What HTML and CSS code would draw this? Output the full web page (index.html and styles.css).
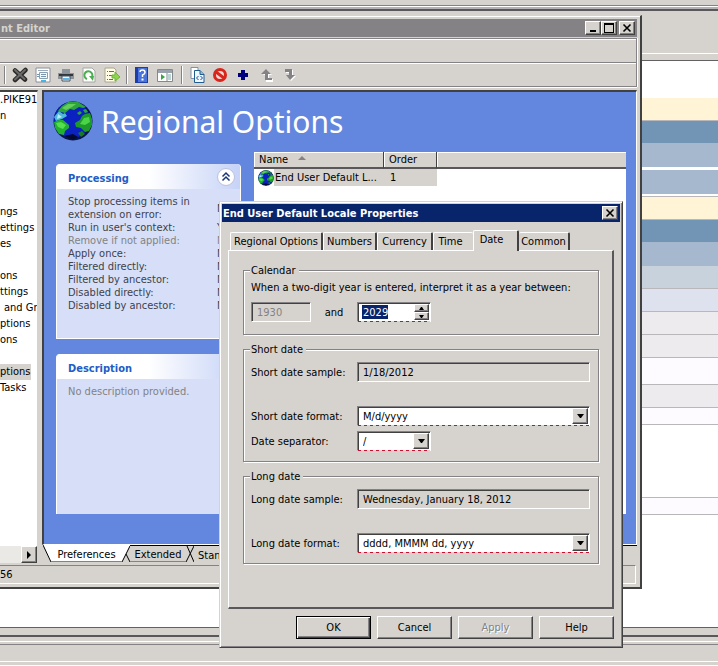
FILE: index.html
```html
<!DOCTYPE html>
<html lang="en">
<head>
<meta charset="utf-8">
<title>Group Policy Management Editor</title>
<link rel="stylesheet" href="styles.css">
</head>
<body>
<svg class="defs" aria-hidden="true">
  <symbol id="globe" viewBox="0 0 40 40">
    <circle cx="20" cy="20" r="19.500" fill="#05124e"/>
    <circle cx="19" cy="19" r="18" fill="#0b22c0"/>
    <path d="M5 10 9 5 15 1 25 1 33 6 30 7 26 6 21 9 17 8 12 12 8 11Z" fill="#2ea53c"/>
    <path d="M9 7 15 3 23 3 19 6 13 9Z" fill="#62cf5c"/>
    <path d="M1 16 6 10 10 13 12 12 14 15 9 18 3 20Z" fill="#4fb8d8"/>
    <path d="M5 13 9 16 4 18Z" fill="#b5ecf5"/>
    <path d="M1 21 6 19 10 19 16 24 16 27 12 30 11 34 6 33 2 27Z" fill="#22b02f"/>
    <path d="M3 22 8 21 13 24 10 28 5 26Z" fill="#55de4e"/>
    <path d="M24 12 27 10 29 12 26 14ZM30 9l3-1 2 3-3 1Z" fill="#2ea53c"/>
    <path d="M32 13 37 12 39 18 39 24 36 30 32 31 28 27 23 26 22 22 27 19 29 15Z" fill="#1e9a2b"/>
    <path d="M31 17 36 16 37 21 32 24 27 23Z" fill="#4bd447"/>
    <path d="M25 32 29 30 32 33 28 36Z" fill="#157c24"/>
    <path d="M11 35 20 33 25 36 20 39Z" fill="#030a30"/>
  </symbol>
</svg>
<div class="desktop">
  <div class="back-top"></div>
  <div class="back-bar"></div>
  <div class="back-tools"></div>
  <div class="bands">
    <div class="band tall"></div>
    <div class="band cream lined"></div>
    <div class="band steel"></div>
    <div class="band sky"></div>
    <div class="band split"></div>
    <div class="band sky"></div>
    <div class="band split lined"></div>
    <div class="band cream lined"></div>
    <div class="band steel"></div>
    <div class="band sky"></div>
    <div class="band mist lined"></div>
    <div class="band lilac lined"></div>
    <div class="band pearl lined"></div>
    <div class="band pearl lined"></div>
    <div class="band pale lined"></div>
    <div class="band pearl lined"></div>
    <div class="band pale short lined"></div>
    <div class="band gap lined"></div>
    <div class="band pale short lined"></div>
  </div>
  <div class="back-edge"></div>
  <div class="back-status"></div>
  <div class="back-foot"></div>

  <section class="editor">
    <header class="titlebar inactive">
      <span class="title">nt Editor</span>
      <button class="cap" aria-label="Minimize"><svg viewBox="0 0 12 10"><path d="M3 7h6v2H3z"/></svg></button>
      <button class="cap" aria-label="Maximize"><svg viewBox="0 0 12 10"><path d="M1 0h10v10H1zM2 2v7h8V2z" fill-rule="evenodd"/></svg></button>
      <button class="cap apart" aria-label="Close"><svg viewBox="0 0 12 10"><path d="m2.500 1.500 7 7M9.500 1.500l-7 7" stroke="#000" stroke-width="1.600"/></svg></button>
    </header>
    <div class="menubar"></div>
    <div class="toolbar">
      <span class="sep first"></span>
      <button aria-label="Delete"><svg viewBox="0 0 16 16"><path d="m3 3.500 10 9M13.500 3 3 13" stroke="#2b2b2b" stroke-width="4.500" stroke-linecap="round"/><path d="m3 3 9.500 9M13 3 3 12.500" stroke="#6a6a6a" stroke-width="2" stroke-linecap="round"/></svg></button>
      <button aria-label="Properties"><svg viewBox="0 0 16 16"><path d="M1 1h14v14H1z" fill="#fff" stroke="#8a9099"/><path d="M3 3.500h10" stroke="#9ab"/><path d="M4.500 5.500h8v6h-8z" fill="#f3f8fb" stroke="#89a0b0"/><path d="M2 7.500h2M2 9.500h2M6 7.500h5M6 9.500h5" stroke="#7795ae"/><path d="M6 13h5v2H6z" fill="#42b5e8"/></svg></button>
      <button aria-label="Print"><svg viewBox="0 0 16 16"><path d="M4 2h8v4H4z" fill="#8c949c"/><path d="M0 6h16v6H0z" fill="#8d9296"/><path d="M1 7h14v2H1z" fill="#33373c"/><path d="M4 9h8v5H4z" fill="#eef6fc" stroke="#456"/><path d="M5 11h6v2H5z" fill="#5fb7e8"/></svg></button>
      <button aria-label="Refresh"><svg viewBox="0 0 16 16"><path d="M2 1h9l3 3v11H2z" fill="#fff" stroke="#a5a5a5"/><path d="M6 12a4 4 0 1 1 5-2" fill="none" stroke="#4cae4f" stroke-width="2"/><path d="m8 9 5 0-1 5z" fill="#4cae4f"/></svg></button>
      <button aria-label="Export list"><svg viewBox="0 0 16 16"><path d="M1 1h9l2 2v12H1z" fill="#fffbe4" stroke="#aaa68c"/><path d="M3 4.500h1M5 4.500h5M3 8.500h1M5 8.500h4M3 12.500h1M5 12.500h4" stroke="#68685c"/><path d="M8 8h3V5l5 5-5 4v-3H8z" fill="#8fd34b" stroke="#6ab53a"/></svg></button>
      <span class="sep"></span>
      <button aria-label="Help"><svg viewBox="0 0 16 16"><path d="M1 0h13v16H1z" fill="#1f3da8"/><path d="M4 1h9v14H4z" fill="#4a74dc"/><path d="M6 5q0-2 2.500-2T11 5.500Q11 7 8.500 8v2" fill="none" stroke="#fff" stroke-width="1.500"/><path d="M7.500 11.500h2v2h-2z" fill="#fff"/></svg></button>
      <button aria-label="Show action pane"><svg viewBox="0 0 16 16"><path d="M.5 2.500h15v12H.5z" fill="#fff" stroke="#84898e"/><path d="M1 3h14v3H1z" fill="#9aa3ab"/><path d="M10 6v8" stroke="#84898e"/><path d="M11 8h3M11 10h3M11 12h3" stroke="#7aa"/><path d="m4 7 4 3-4 3z" fill="#3aa344"/></svg></button>
      <span class="sep wide"></span>
      <button aria-label="Show XML"><svg viewBox="0 0 16 16"><path d="M2 .5h7v11H2z" fill="#fff" stroke="#7b93a8"/><path d="M5.500 3.500H11l4 4v8H5.500z" fill="#eef6ff" stroke="#1e5d8e"/><path d="M11 3.500v4h4" fill="#8db8dc" stroke="#1e5d8e"/><path d="m9.500 9-2 2 2 2M11.500 9l2 2-2 2" fill="none" stroke="#124c9e"/></svg></button>
      <button aria-label="Disable"><svg viewBox="0 0 16 16"><circle cx="8" cy="8" r="5.500" fill="#f3d8d2" stroke="#d9261c" stroke-width="3"/><path d="m4 5 8 6" stroke="#d9261c" stroke-width="3"/></svg></button>
      <button aria-label="Add"><svg viewBox="0 0 16 16"><path d="M6 3h4v3h3v4h-3v3H6v-3H3V6h3z" fill="#00007e"/></svg></button>
      <button aria-label="Move up"><svg viewBox="0 0 16 16"><path d="M9 3l5 5h-3v4h4v3H8V8H5z" fill="#fff"/><path d="M8 2l5 5h-3v4h4v2H7V7H3z" fill="#848284"/></svg></button>
      <button aria-label="Move down"><svg viewBox="0 0 16 16"><path d="M5 3h7v6h3l-5 5-4-5h3V6H5z" fill="#fff"/><path d="M4 2h7v6h3l-5 5-4-5h3V5H4z" fill="#848284"/></svg></button>
    </div>

    <div class="main">
      <nav class="tree">
        <ul>
          <li>.PIKE91</li><li>n</li><li></li><li></li><li></li><li></li><li></li>
          <li>ngs</li><li>ettings</li><li>es</li><li></li><li>ons</li><li>ttings</li>
          <li class="indent">and Gro</li><li>ptions</li><li>ons</li><li></li>
          <li><span class="current">ptions</span></li><li>Tasks</li>
        </ul>
        <div class="hscroll"><button aria-label="Scroll right"><svg viewBox="0 0 8 8"><path d="M2 0l4 4-4 4z"/></svg></button></div>
      </nav>
      <div class="pane">
        <div class="blue">
          <div class="heading"><svg class="globe-lg"><use href="#globe"/></svg><h1>Regional Options</h1></div>
          <div class="columns">
            <aside class="cards">
              <section class="card processing">
                <h2>Processing <button aria-label="Collapse"><svg viewBox="0 0 18 18"><circle cx="9" cy="9" r="8.500" fill="#fff" stroke="#b9c1dc"/><path d="M5.500 8.500 9 5l3.500 3.500M5.500 12.500 9 9l3.500 3.500" fill="none" stroke="#17357c" stroke-width="1.500"/></svg></button></h2>
                <dl>
                  <dt>Stop processing items in extension on error:</dt><dd>No</dd>
                  <dt>Run in user's context:</dt><dd>Yes</dd>
                  <dt class="off">Remove if not applied:</dt><dd class="off">No</dd>
                  <dt>Apply once:</dt><dd>No</dd>
                  <dt>Filtered directly:</dt><dd>No</dd>
                  <dt>Filtered by ancestor:</dt><dd>No</dd>
                  <dt>Disabled directly:</dt><dd>No</dd>
                  <dt>Disabled by ancestor:</dt><dd>No</dd>
                </dl>
              </section>
              <section class="card description">
                <h2>Description</h2>
                <p>No description provided.</p>
              </section>
            </aside>
            <div class="list">
              <table>
                <thead><tr><th class="name">Name <svg class="sort" viewBox="0 0 8 4"><path d="M4 0l4 4H0z"/></svg></th><th class="order">Order</th><th></th></tr></thead>
                <tbody><tr><td><div class="item"><svg class="globe-sm"><use href="#globe"/></svg><span>End User Default L...</span></div></td><td class="picked">1</td><td></td></tr></tbody>
              </table>
            </div>
          </div>
        </div>
        <div class="sheets">
          <svg class="slope" viewBox="0 0 8 17"><path d="M0 0h8v17z" fill="#fff"/><path d="M0 0l8 17" stroke="#000"/></svg>
          <button class="sheet on">Preferences</button>
          <svg class="slope" viewBox="0 0 8 17"><path d="M0 0h8L0 17z" fill="#fff"/><path d="M8 1 0 17M4 9l4 8" stroke="#000" fill="none"/></svg>
          <button class="sheet">Extended</button>
          <svg class="slope" viewBox="0 0 8 17"><path d="M0 .5h8M8 1 0 17M1 1l7 16" stroke="#000" fill="none"/></svg>
          <button class="sheet last">Standard</button>
        </div>
      </div>
    </div>
    <footer class="status"><span>56</span></footer>
  </section>

  <form class="dialog" role="dialog" aria-label="End User Default Locale Properties">
    <header class="titlebar">
      <span class="title">End User Default Locale Properties</span>
      <button type="button" class="cap" aria-label="Close dialog"><svg viewBox="0 0 12 10"><path d="m2.500 1.500 7 7M9.500 1.500l-7 7" stroke="#000" stroke-width="1.600"/></svg></button>
    </header>
    <div class="tabs" role="tablist">
      <button type="button" role="tab" class="tab t-regional">Regional Options</button>
      <button type="button" role="tab" class="tab t-numbers">Numbers</button>
      <button type="button" role="tab" class="tab t-currency">Currency</button>
      <button type="button" role="tab" class="tab t-time">Time</button>
      <button type="button" role="tab" class="tab active" aria-selected="true">Date</button>
      <button type="button" role="tab" class="tab t-common">Common</button>
    </div>
    <div class="page">
      <fieldset>
        <legend>Calendar</legend>
        <p class="lead">When a two-digit year is entered, interpret it as a year between:</p>
        <div class="years">
          <input class="field from" aria-label="From year" value="1930" disabled>
          <label for="to">and</label>
          <div class="box required spin"><input id="to" value="2029"><div class="arrows"><button type="button" aria-label="Increase"><svg viewBox="0 0 5 3"><path d="M2 0h1l2 3H0z"/></svg></button><button type="button" aria-label="Decrease"><svg viewBox="0 0 5 3"><path d="M0 0h5L3 3H2z"/></svg></button></div></div>
        </div>
      </fieldset>
      <fieldset>
        <legend>Short date</legend>
        <div class="rows">
          <label for="ss">Short date sample:</label><input id="ss" class="field" value="1/18/2012" readonly>
          <label for="sf" class="spaced">Short date format:</label><div class="box required spaced"><select id="sf"><option>M/d/yyyy</option></select><span class="drop"><svg viewBox="0 0 7 4"><path d="M0 0h7L4 4H3z"/></svg></span></div>
          <label for="ds">Date separator:</label><div class="box required narrow"><select id="ds"><option>/</option></select><span class="drop"><svg viewBox="0 0 7 4"><path d="M0 0h7L4 4H3z"/></svg></span></div>
        </div>
      </fieldset>
      <fieldset>
        <legend>Long date</legend>
        <div class="rows">
          <label for="ls">Long date sample:</label><input id="ls" class="field" value="Wednesday, January 18, 2012" readonly>
          <label for="lf" class="spaced">Long date format:</label><div class="box required spaced"><select id="lf"><option>dddd, MMMM dd, yyyy</option></select><span class="drop"><svg viewBox="0 0 7 4"><path d="M0 0h7L4 4H3z"/></svg></span></div>
        </div>
      </fieldset>
    </div>
    <div class="actions">
      <button type="button" class="push default">OK</button>
      <button type="button" class="push">Cancel</button>
      <button type="button" class="push" disabled>Apply</button>
      <button type="button" class="push">Help</button>
    </div>
  </form>
</div>
</body>
</html>
```
FILE: styles.css
```css
:root {
  --face: #d6d3ce;
  --shade: #848284;
  --dark: #424142;
  --navy: #08246b;
  --blue: #6387de;
}
* { box-sizing: border-box; }
body {
  margin: 0;
  background: var(--face);
  color: #000;
  font: 11px/13px "DejaVu Sans Condensed", "Noto Sans", sans-serif;
}
button, input, select { font: inherit; color: inherit; margin: 0; padding: 0; border: 0; border-radius: 0; background: none; outline: 0; }
p, h1, h2, ul, dl, dd { margin: 0; padding: 0; }
svg { display: block; flex: none; }
.defs { position: absolute; width: 0; height: 0; }

/* window behind the editor */
.desktop { position: relative; display: flex; flex-direction: column; min-height: 100vh; overflow: hidden; }
.back-top { height: 6px; border-bottom: 1px solid var(--shade); }
.back-bar { height: 5px; border-top: 1px solid #fff; border-bottom: 2px solid #5a575a; background: #b5b2b5; }
.back-tools { height: 43px; border-bottom: 1px solid #fff; }
.bands { margin-top: 6px; flex: 1; background: #fff; border-top: 1px solid #636163; border-bottom: 1px solid #636163; }
.band { height: 23px; }
.band.tall { height: 37px; }
.lined { border-bottom: 1px solid #b9b7ba; }
.cream { background: #fff5d6; }
.steel { background: #7295b5; }
.band.steel { height: 22px; }
.band.sky { height: 24px; background: #a5b8ce; }
.band.split { height: 3px; }
.mist { background: #c8d2dd; }
.lilac { background: #dee2ef; }
.pearl { background: #eeebee; }
.pale { background: #fdfbff; }
.band.pale { height: 27px; }
.band.pale.short { height: 17px; }
.band.gap { height: 73px; }
.back-edge { height: 9px; border-bottom: 2px solid #5a575a; }
.back-status { height: 8px; margin-top: 4px; border-top: 1px solid #fff; }
.back-status::after { content: ""; display: block; margin-top: 2px; border-top: 1px solid var(--shade); }
.back-foot { height: 17px; padding-top: 12px; }
.back-foot::after { content: ""; display: block; height: 3px; border-top: 1px solid #fff; border-bottom: 1px solid #fff; }

/* shared window chrome */
.titlebar { display: flex; align-items: center; height: 18px; padding-right: 2px; background: var(--navy); color: #fff; font-weight: bold; }
.titlebar.inactive { background: var(--shade); color: var(--face); }
.title { flex: 1; padding-left: 1px; white-space: nowrap; overflow: hidden; }
.cap { width: 16px; height: 14px; padding: 1px; background: var(--face); border: 1px solid; border-color: #fff var(--dark) var(--dark) #fff; box-shadow: inset -1px -1px var(--shade); }
.cap svg { width: 12px; height: 10px; }
.cap.apart { margin-left: 2px; }

/* editor window */
.editor { position: absolute; left: 0; right: 76px; top: 15px; padding: 2px 3px 3px 0; background: var(--face); border: solid; border-width: 1px 2px 2px 0; border-color: var(--face) var(--dark) var(--dark) #fff; box-shadow: inset 0 1px #fff; }
.editor > .titlebar { margin-top: 1px; }
.menubar { height: 24px; margin-top: 1px; border: 1px solid var(--shade); border-left: 0; border-bottom: 0; box-shadow: inset 0 1px #fff, 1px 0 #fff; }
.toolbar { display: flex; align-items: center; height: 25px; border: 1px solid var(--shade); border-left: 0; box-shadow: inset 0 1px #fff, 0 1px #fff, 1px 0 #fff; }
.toolbar button { display: grid; place-items: center; width: 23px; height: 22px; }
.toolbar button svg { width: 16px; height: 16px; }
.sep { width: 2px; height: 18px; margin: 0 2px 0 3px; border-left: 1px solid var(--shade); border-right: 1px solid #fff; }
.sep.first { margin-left: 4px; }
.sep.wide { margin: 0 2px 0 5px; }
.main { display: flex; margin-top: 3px; }
.tree { display: flex; flex-direction: column; justify-content: space-between; width: 38px; overflow: hidden; background: #fff; border-top: 2px solid var(--dark); border-right: 1px solid var(--face); }
.tree ul { list-style: none; }
.tree li { height: 16px; line-height: 16px; white-space: nowrap; }
.tree .indent { padding-left: 4px; }
.current { display: inline-block; padding-right: 1px; background: var(--face); }
.hscroll { display: flex; justify-content: flex-end; height: 17px; background: #ebe9e6; }
.hscroll button { display: grid; place-items: center; width: 16px; background: var(--face); border: 1px solid; border-color: #fff var(--dark) var(--dark) #fff; box-shadow: inset -1px -1px var(--shade); }
.hscroll svg { width: 8px; height: 8px; }
.pane { flex: 1; min-width: 0; margin-left: 4px; }
.blue { padding: 9px 10px 30px 12px; background: var(--blue); border: solid; border-width: 2px 1px 1px 2px; border-color: var(--dark) #fff #fff var(--dark); }
.heading { display: flex; align-items: center; gap: 8px; height: 51px; margin-left: -3px; padding-bottom: 11px; }
.globe-lg { width: 40px; height: 40px; }
h1 { padding-top: 2px; color: #fff; font: 30px/40px "Noto Sans", sans-serif; white-space: nowrap; }
.columns { display: grid; grid-template-columns: 185px 1fr; gap: 13px; min-height: 362px; }
.cards { display: flex; flex-direction: column; gap: 15px; padding-top: 12px; color: #42414a; }
.card { background: #d6dff7; border: solid #fff; border-width: 0 1px 1px; border-radius: 4px 4px 0 0; overflow: hidden; }
.card.processing { min-height: 175px; }
.card.description { flex: 1; border-bottom: 0; }
.card h2 { display: flex; align-items: center; justify-content: space-between; height: 25px; padding: 3px 5px 0 11px; background: linear-gradient(90deg, #fff 50%, #c6d3f7); color: #215dc6; font-size: 11px; line-height: 13px; }
.card h2 button { margin-top: -3px; }
.card h2 svg { width: 18px; height: 18px; }
.card dl { display: grid; grid-template-columns: 1fr 23px; padding: 6px 0 0 11px; }
.card dt { padding-right: 25px; white-space: nowrap; }
.card dt:first-child { white-space: normal; }
.card dd { align-self: center; }
.card p { padding: 6px 11px; color: #848284; }
.off { color: #848284; }
.list { background: #fff; }
.list table { width: 100%; border-collapse: separate; border-spacing: 0; table-layout: fixed; }
.list th { height: 17px; padding: 0 5px; background: var(--face); border-bottom: 2px solid #5a575a; box-shadow: inset 0 1px #fff, inset 1px 0 #fff; text-align: left; font-weight: normal; line-height: 14px; }
.list .name, .list .order { border-right: 1px solid var(--dark); }
.list .name { width: 130px; }
.list .order { width: 53px; }
.sort { display: inline-block; width: 8px; height: 4px; margin: 0 0 3px 7px; fill: var(--shade); }
.list td { height: 17px; padding: 0; }
.item { display: flex; align-items: center; padding-left: 4px; white-space: nowrap; }
.item span { flex: 1; padding-left: 1px; line-height: 17px; background: var(--face); }
.globe-sm { width: 16px; height: 16px; }
.list .picked { padding-left: 6px; background: var(--face); }
.sheets { display: flex; height: 18px; padding-left: 1px; }
.slope { width: 8px; height: 17px; }
.sheet { width: 56px; height: 17px; padding-top: 2px; border-top: 1px solid #000; border-bottom: 1px solid var(--shade); white-space: nowrap; }
.sheet.on { width: 71px; background: #fff; border-top: 0; }
.sheet.last { flex: 1; text-align: left; padding-left: 4px; border-bottom: 0; }
.status { height: 19px; margin: 2px 1px 0 0; border: solid; border-width: 1px 1px 1px 0; border-color: var(--shade) #fff #fff; line-height: 17px; }

/* properties dialog */
.dialog { position: absolute; left: 219px; right: 95px; top: 201px; padding: 2px 2px 8px; background: var(--face); border: 1px solid; border-color: var(--face) var(--dark) var(--dark) var(--face); box-shadow: inset 1px 1px #fff, inset -1px -1px var(--shade); }
.tabs { display: flex; align-items: flex-end; height: 28px; padding-left: 8px; }
.tab { height: 18px; white-space: nowrap; border: solid; border-width: 1px 2px 0 1px; border-color: #fff var(--dark) #fff #fff; border-radius: 2px 2px 0 0; }
.t-regional { width: 93px; }
.t-numbers { width: 54px; }
.t-currency { width: 56px; }
.t-time { width: 40px; padding-right: 6px; border-right: 0; }
.tab.active { z-index: 1; width: 46px; height: 21px; margin-bottom: -1px; padding: 0 8px 3px 0; background: var(--face); }
.t-common { width: 51px; border-left: 0; }
.page { margin: 0 6px; padding: 13px 13px 43px 14px; border: solid; border-width: 1px 2px 2px 1px; border-color: #fff #5a575a #5a575a #fff; }
fieldset { min-width: 0; margin: 0 0 8px; padding: 0 8px 10px 7px; border: 1px solid var(--shade); box-shadow: inset 1px 1px #fff, 1px 1px #fff; }
fieldset:last-child { margin-bottom: 0; }
legend { height: 13px; padding: 0 3px 0 1px; margin-left: -1px; background: var(--face); }
.lead { padding-top: 4px; line-height: 14px; white-space: nowrap; }
.years { display: flex; align-items: center; margin-top: 7px; padding-bottom: 2px; }
.years label { width: 46px; text-align: center; }
.rows { display: grid; grid-template-columns: 106px 1fr; align-items: center; row-gap: 5px; padding-top: 6px; }
.spaced { margin-top: 19px; }
.field, .box { height: 20px; min-width: 0; border: 1px solid; border-color: var(--shade) #fff #fff var(--shade); box-shadow: inset 1px 1px var(--dark); }
.field { padding: 0 5px; background: var(--face); }
.field.from { width: 60px; color: var(--shade); }
.box { position: relative; display: flex; padding: 1px; background: #fff; }
.required::after { content: ""; position: absolute; left: 0; right: 0; bottom: -1px; height: 1px; background: repeating-linear-gradient(90deg, #c41230 0 3px, #f5c6cb 3px 6px); }
.box select { flex: 1; min-width: 0; padding-left: 4px; appearance: none; }
.box.narrow { width: 74px; }
.box.spin { width: 74px; }
.spin input { flex: 1; min-width: 0; margin: 1px 0 1px 3px; padding-left: 1px; color: #fff; background: linear-gradient(var(--navy), var(--navy)) 0 0 / 26px 100% no-repeat; }
.drop, .arrows button { display: grid; place-items: center; background: var(--face); border: 1px solid; border-color: #fff var(--dark) var(--dark) #fff; box-shadow: inset -1px -1px var(--shade); }
.drop { width: 16px; pointer-events: none; }
.drop svg { width: 7px; height: 4px; }
.arrows { display: grid; grid-template-rows: 1fr 1fr; width: 15px; }
.arrows svg { width: 5px; height: 3px; }
.actions { display: flex; justify-content: flex-end; gap: 6px; margin: 7px 6px 0; }
.push { width: 75px; height: 23px; border: 1px solid; border-color: #fff var(--dark) var(--dark) #fff; box-shadow: inset -1px -1px var(--shade); }
.push.default { border-color: #000; box-shadow: inset 1px 1px #fff, inset -1px -1px var(--dark), inset -2px -2px var(--shade); }
.push:disabled { color: var(--shade); text-shadow: 1px 1px #fff; }
```
